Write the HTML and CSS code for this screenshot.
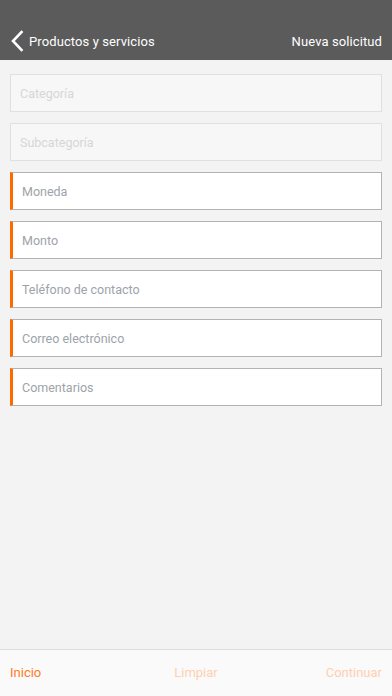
FILE: index.html
```html
<!DOCTYPE html>
<html lang="es">
<head>
<meta charset="utf-8">
<link rel="stylesheet" href="styles.css">
</head>
<body>
<div class="app">
  <header class="topbar">
    <div class="back">
      <svg class="chev" width="14" height="22" viewBox="0 0 14 22"><path d="M11.5 2 L3 11 L11.5 20" fill="none" stroke="#fff" stroke-width="2.6" stroke-linecap="square"/></svg>
      <span>Productos y servicios</span>
    </div>
    <span class="action">Nueva solicitud</span>
  </header>
  <main class="form">
    <div class="field disabled">Categoría</div>
    <div class="field disabled">Subcategoría</div>
    <div class="field">Moneda</div>
    <div class="field">Monto</div>
    <div class="field">Teléfono de contacto</div>
    <div class="field">Correo electrónico</div>
    <div class="field">Comentarios</div>
  </main>
  <footer class="bottombar">
    <span class="btn active left">Inicio</span>
    <span class="btn faded center">Limpiar</span>
    <span class="btn faded right">Continuar</span>
  </footer>
</div>
</body>
</html>
```
FILE: styles.css
```css
html, body { margin: 0; padding: 0; }
body {
  font-family: Roboto, "Liberation Sans", sans-serif;
  background: #f3f3f3;
}
.app {
  width: 392px;
  height: 696px;
  display: flex;
  flex-direction: column;
}
.topbar {
  height: 60px;
  background: #5b5b5b;
  display: flex;
  align-items: flex-end;
  justify-content: space-between;
  padding: 0 10px 7px 10px;
  box-sizing: border-box;
  color: #fff;
  font-size: 13px;
  letter-spacing: 0.1px;
}
.back { display: flex; align-items: center; gap: 5px; }
.chev { display: block; margin-bottom: 1px; }
.back span, .action { line-height: 18px; }
.action { margin-bottom: 2px; }
.form {
  flex: 1;
  padding: 14px 10px 0 10px;
  display: flex;
  flex-direction: column;
  gap: 11px;
}
.field {
  height: 38px;
  box-sizing: border-box;
  background: #fff;
  border: 1px solid #b3b3b3;
  border-left: 3px solid #ff6a00;
  padding-left: 9px;
  padding-top: 1px;
  display: flex;
  align-items: center;
  font-size: 12.5px;
  color: #9da3aa;
}
.field.disabled {
  background: #f7f7f7;
  border: 1.5px solid #e0e0e0;
  padding-left: 9px;
  color: #d6d6d6;
}
.bottombar {
  height: 47px;
  background: #fafafa;
  border-top: 1px solid #dedede;
  display: grid;
  grid-template-columns: 1fr auto 1fr;
  align-items: center;
  padding: 0 10px 2px 10px;
  box-sizing: border-box;
  font-size: 13px;
}
.btn.left { justify-self: start; }
.btn.center { justify-self: center; }
.btn.right { justify-self: end; }
.btn.active { color: #ff7a26; }
.btn.faded { color: #ffd0b0; }
```
